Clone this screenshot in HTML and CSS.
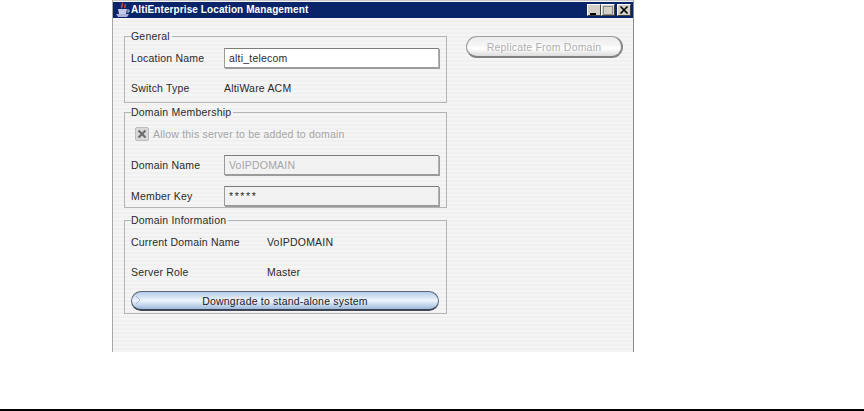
FILE: index.html
```html
<!DOCTYPE html>
<html lang="en">
<head>
<meta charset="utf-8">
<title>AltiEnterprise Location Management</title>
<link rel="stylesheet" href="styles.css">
</head>
<body>
<div class="window">
  <div class="titlebar">
    <svg class="java" width="16" height="16" viewBox="0 0 16 16"><path d="M7 1c2 2-2 3 0 5M10 2c1 2-1 2 0 4" stroke="#d8483a" stroke-width="1.5" fill="none"/><path d="M3 7h9l-1 5H4z" fill="#c4c9e6"/><path d="M1 12h13l-2 3H3z" fill="#aab1d8"/><path d="M12 8h2v2h-2" stroke="#c4c9e6" fill="none"/></svg>
    <span class="title">AltiEnterprise Location Management</span>
    <div class="controls">
      <span class="ctl"><svg width="12" height="11" viewBox="0 0 12 11"><rect x="2" y="8" width="6" height="2" fill="#000"/></svg></span>
      <span class="ctl"><svg width="12" height="11" viewBox="0 0 12 11"><rect x="1.5" y="1.5" width="9" height="8" fill="none" stroke="#8c8c8c"/><rect x="1" y="1" width="10" height="1" fill="#8c8c8c"/></svg></span>
      <span class="ctl close"><svg width="12" height="11" viewBox="0 0 12 11"><path d="M2.500 1.500l7 7M9.500 1.500l-7 7" stroke="#000" stroke-width="1.7"/></svg></span>
    </div>
  </div>
  <div class="content">
    <div class="left">
      <fieldset class="group general">
        <legend>General</legend>
        <div class="row first"><span class="label">Location Name</span><div class="field">alti_telecom</div></div>
        <div class="row"><span class="label">Switch Type</span><span class="value">AltiWare ACM</span></div>
      </fieldset>
      <fieldset class="group member">
        <legend>Domain Membership</legend>
        <div class="check"><span class="box"><svg width="12" height="12" viewBox="0 0 12 12"><path d="M2.500 2.500l7 7M9.500 2.500l-7 7" stroke="#6e6e6e" stroke-width="2.2"/></svg></span><span class="muted">Allow this server to be added to domain</span></div>
        <div class="row"><span class="label">Domain Name</span><div class="field off muted">VoIPDOMAIN</div></div>
        <div class="row"><span class="label">Member Key</span><div class="field off key">*****</div></div>
      </fieldset>
      <fieldset class="group info">
        <legend>Domain Information</legend>
        <div class="row first"><span class="label wide">Current Domain Name</span><span class="value">VoIPDOMAIN</span></div>
        <div class="row"><span class="label wide">Server Role</span><span class="value">Master</span></div>
        <button class="pill blue" type="button"><svg class="tri" width="6" height="10" viewBox="0 0 6 10"><path d="M1 1l4 4-4 4" fill="none" stroke="#a9b8d0"/></svg>Downgrade to stand-alone system</button>
      </fieldset>
    </div>
    <div class="right">
      <button class="pill grey" type="button" disabled>Replicate From Domain</button>
    </div>
  </div>
</div>
<div class="rule"></div>
</body>
</html>
```
FILE: styles.css
```css
* { box-sizing: border-box; }
html, body { margin: 0; padding: 0; background: #fff; }
body {
  width: 864px;
  height: 411px;
  overflow: hidden;
  font: 10.5px/12px "Liberation Sans", Arial, sans-serif;
  letter-spacing: 0.2px;
  color: #2a2a2a;
}
.window {
  margin-left: 112px;
  width: 522px;
  height: 352px;
  border-left: 1px solid #a8a8a8;
  border-right: 1px solid #8a8a8a;
  border-top: 1px solid #c8c8c8;
  padding-top: 1px;
  background: #f3f3f3;
  display: flex;
  flex-direction: column;
}
.titlebar {
  height: 16px;
  background: #0a246a;
  color: #fff;
  display: flex;
  align-items: center;
  padding: 0 2px;
}
.java { flex: none; }
.title { font-weight: bold; font-size: 10px; letter-spacing: 0.1px; }
.controls { margin-left: auto; display: flex; }
.ctl {
  width: 14px;
  height: 12px;
  margin-left: 2px;
  background: #d4d0c8;
  border: 1px solid;
  border-color: #fff #404040 #404040 #fff;
  display: flex;
  align-items: center;
  justify-content: center;
}
.ctl svg { flex: none; }
.ctl:nth-child(2) { margin-left: 0; }
.content {
  flex: 1;
  display: flex;
  padding: 12px 0 0 11px;
  background: repeating-linear-gradient(180deg, #f5f5f5 0 2px, #f0f0f0 2px 4px);
}
.left {
  width: 323px;
  display: flex;
  flex-direction: column;
}
.group {
  margin: 0;
  padding: 0 0 0 6px;
  border: 1px solid #b4b4b4;
  min-width: 0;
}
.group legend {
  padding: 0 2px 0 0;
  line-height: 12px;
}
.general { height: 73px; }
.member { height: 102px; margin-top: 3px; }
.info { height: 100px; margin-top: 6px; }
.row { display: flex; align-items: center; height: 30px; }
.first { margin-top: 1px; }
.member .row { height: 20px; margin-top: 11px; }
.member .check + .row { margin-top: 13px; }
.label { width: 93px; flex: none; }
.label.wide { width: 136px; }
.field {
  width: 215px;
  height: 20px;
  padding: 0 4px;
  background: #fff;
  border: 1px solid #9a9a9a;
  border-top-color: #7c7c7c;
  border-right-color: #b0b0b0;
  box-shadow: 1px 1px 0 #9c9c9c;
  display: flex;
  align-items: center;
}
.field.off { background: #f2f2f2; }
.key { letter-spacing: 1.6px; }
.muted { color: #a6a6a6; }
.check { display: flex; align-items: center; height: 16px; margin: 8px 0 0 4px; gap: 4px; }
.box {
  width: 14px;
  height: 14px;
  background: #d9d9d9;
  border: 1px solid #bcbcbc;
  border-radius: 2px;
  display: flex;
  align-items: center;
  justify-content: center;
}
.box svg { flex: none; }
.pill {
  display: block;
  position: relative;
  font: inherit;
  letter-spacing: inherit;
  padding: 0;
  border-radius: 11px;
  text-align: center;
}
.blue {
  width: 308px;
  height: 20px;
  margin-top: 4px;
  color: #1c1c1c;
  border: 1px solid #5a6478;
  border-bottom: 2px solid #3e4554;
  background: linear-gradient(180deg, #b6cde8 0%, #dbe8f6 35%, #eef4fb 50%, #c5d8ee 75%, #9fb9d9 100%);
}
.tri { position: absolute; left: 3px; top: 3px; }
.right { padding: 6px 0 0 19px; }
.grey {
  width: 157px;
  height: 22px;
  color: #b0b0b0;
  border: 1px solid #9c9c9c;
  border-bottom: 2px solid #808080;
  border-right: 2px solid #8a8a8a;
  background: linear-gradient(180deg, #ececec 0%, #f6f6f6 45%, #fff 60%, #dcdcdc 100%);
}
.rule {
  margin-top: 57px;
  height: 2px;
  background: #000;
}
```
